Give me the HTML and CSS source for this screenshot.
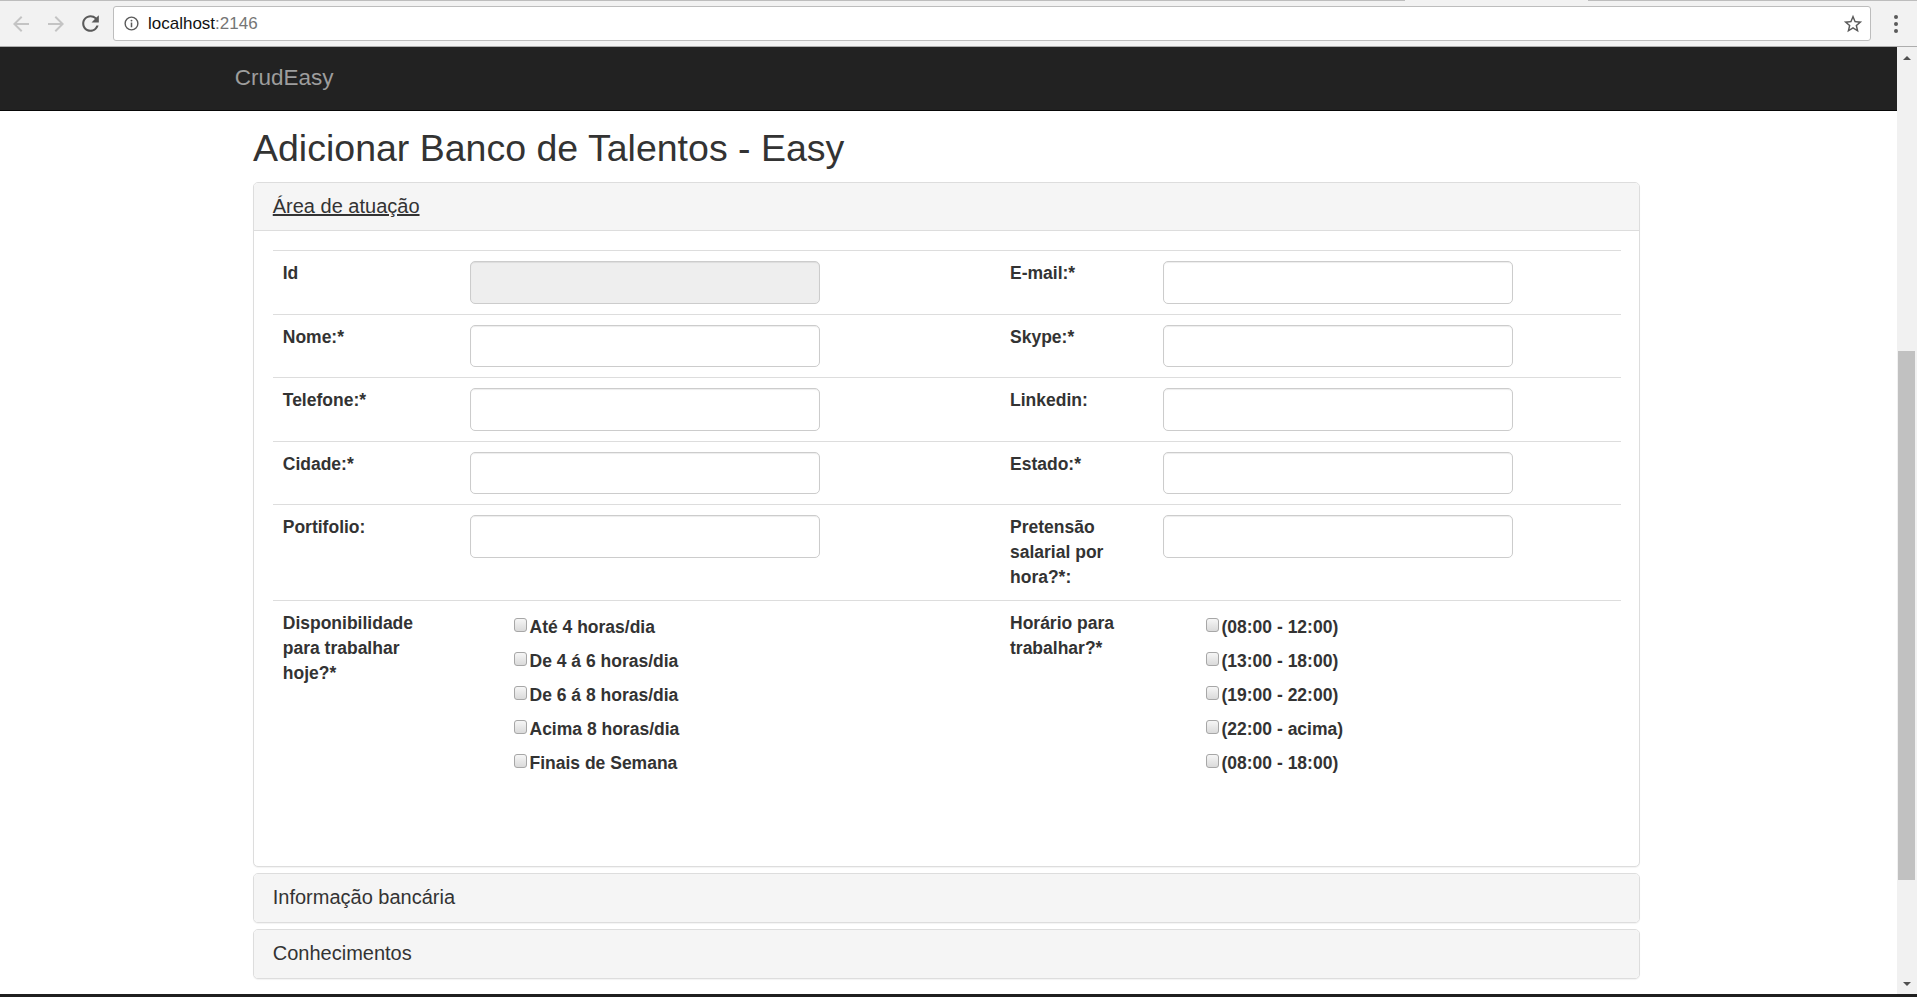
FILE: index.html
```html
<!DOCTYPE html>
<html lang="pt-BR">
<head>
<meta charset="utf-8">
<title>CrudEasy</title>
<link rel="stylesheet" href="styles.css">
</head>
<body>
<div class="chrome">
  <div class="tabline"><div class="seg1"></div><div class="gap"></div><div class="seg2"></div></div>
  <div class="toolbar">
    <div class="navbtn">
      <svg width="16" height="16" viewBox="0 0 16 16"><path d="M16 7H3.8l5.6-5.6L8 0 0 8l8 8 1.4-1.4L3.8 9H16z" fill="#c4c4c4"/></svg>
    </div>
    <div class="navbtn">
      <svg width="16" height="16" viewBox="0 0 16 16"><path d="M0 7h12.2L6.6 1.4 8 0l8 8-8 8-1.4-1.4L12.2 9H0z" fill="#c4c4c4"/></svg>
    </div>
    <div class="navbtn">
      <svg width="25" height="25" viewBox="0 0 24 24"><path d="M17.65 6.35A7.958 7.958 0 0 0 12 4c-4.42 0-7.99 3.58-7.99 8s3.57 8 7.99 8c3.730 0 6.84-2.55 7.73-6h-2.08A5.99 5.99 0 0 1 12 18c-3.31 0-6-2.69-6-6s2.69-6 6-6c1.66 0 3.14.69 4.22 1.78L13 11h7V4l-2.35 2.35z" fill="#5a5a5a"/></svg>
    </div>
    <div class="omnibox">
      <svg class="info" width="15" height="15" viewBox="0 0 16 16"><circle cx="8" cy="8" r="6.8" fill="none" stroke="#5a5a5a" stroke-width="1.5"/><rect x="7.2" y="7" width="1.6" height="5" fill="#5a5a5a"/><circle cx="8" cy="4.9" r="1" fill="#5a5a5a"/></svg>
      <span class="url">localhost<span class="port">:2146</span></span>
      <svg class="star" width="22" height="22" viewBox="0 0 24 24"><path d="M22 9.24l-7.19-.62L12 2 9.19 8.63 2 9.24l5.46 4.73L5.82 21 12 17.27 18.18 21l-1.63-7.03L22 9.24zM12 15.4l-3.76 2.27 1-4.28-3.32-2.88 4.38-.38L12 6.1l1.71 4.04 4.38.38-3.32 2.88 1 4.28L12 15.4z" fill="#5a5a5a"/></svg>
    </div>
    <div class="menu"><span></span><span></span><span></span></div>
  </div>
</div>

<div class="viewport">
  <div class="page">
    <div class="navbar"><span class="brand">CrudEasy</span></div>
    <div class="content">
      <h2 class="title">Adicionar Banco de Talentos - Easy</h2>

      <div class="panel">
        <div class="panel-heading open"><a class="panel-title underline">Área de atuação</a></div>
        <div class="panel-body">
          <table class="form-table">
            <colgroup><col class="c1"><col class="c2"><col class="c3"><col class="c4"></colgroup>
            <tr>
              <td><label>Id</label></td>
              <td><input class="form-control" disabled></td>
              <td><label>E-mail:*</label></td>
              <td><input class="form-control"></td>
            </tr>
            <tr>
              <td><label>Nome:*</label></td>
              <td><input class="form-control"></td>
              <td><label>Skype:*</label></td>
              <td><input class="form-control"></td>
            </tr>
            <tr>
              <td><label>Telefone:*</label></td>
              <td><input class="form-control"></td>
              <td><label>Linkedin:</label></td>
              <td><input class="form-control"></td>
            </tr>
            <tr>
              <td><label>Cidade:*</label></td>
              <td><input class="form-control"></td>
              <td><label>Estado:*</label></td>
              <td><input class="form-control"></td>
            </tr>
            <tr>
              <td><label>Portifolio:</label></td>
              <td><input class="form-control"></td>
              <td><label>Pretensão salarial por hora?*:</label></td>
              <td><input class="form-control"></td>
            </tr>
            <tr class="tall">
              <td><label>Disponibilidade para trabalhar hoje?*</label></td>
              <td>
                <div class="checks left">
                  <label class="check"><input type="checkbox">Até 4 horas/dia</label>
                  <label class="check"><input type="checkbox">De 4 á 6 horas/dia</label>
                  <label class="check"><input type="checkbox">De 6 á 8 horas/dia</label>
                  <label class="check"><input type="checkbox">Acima 8 horas/dia</label>
                  <label class="check"><input type="checkbox">Finais de Semana</label>
                </div>
              </td>
              <td><label>Horário para trabalhar?*</label></td>
              <td>
                <div class="checks right">
                  <label class="check"><input type="checkbox">(08:00 - 12:00)</label>
                  <label class="check"><input type="checkbox">(13:00 - 18:00)</label>
                  <label class="check"><input type="checkbox">(19:00 - 22:00)</label>
                  <label class="check"><input type="checkbox">(22:00 - acima)</label>
                  <label class="check"><input type="checkbox">(08:00 - 18:00)</label>
                </div>
              </td>
            </tr>
          </table>
        </div>
      </div>

      <div class="panel collapsed">
        <div class="panel-heading"><a class="panel-title">Informação bancária</a></div>
      </div>
      <div class="panel collapsed">
        <div class="panel-heading"><a class="panel-title">Conhecimentos</a></div>
      </div>
    </div>
  </div>
  <div class="scrollbar">
    <div class="sb-btn"><span class="tri-up"></span></div>
    <div class="sb-space"></div>
    <div class="sb-thumb"></div>
    <div class="sb-fill"></div>
    <div class="sb-btn"><span class="tri-down"></span></div>
  </div>
</div>
<div class="taskbar"></div>
</body>
</html>
```
FILE: styles.css
```css
* { box-sizing: border-box; }
html, body { margin: 0; padding: 0; }
body {
  width: 1917px;
  height: 997px;
  overflow: hidden;
  display: flex;
  flex-direction: column;
  font-family: "Liberation Sans", Arial, sans-serif;
  color: #333;
  background: #fff;
}

/* browser chrome */
.chrome {
  flex: none;
  height: 47px;
  background: #f2f2f2;
  border-bottom: 1px solid #adadad;
  display: flex;
  flex-direction: column;
}
.tabline { height: 1px; display: flex; flex: none; }
.tabline .seg1 { width: 1405px; background: #bdbdbd; }
.tabline .gap { width: 183px; }
.tabline .seg2 { flex: 1; background: #bdbdbd; }
.toolbar {
  flex: 1;
  display: flex;
  align-items: center;
  padding-left: 3px;
}
.navbtn {
  width: 35px;
  height: 35px;
  display: flex;
  align-items: center;
  justify-content: center;
}
.omnibox {
  margin-left: 5px;
  width: 1758px;
  height: 35px;
  background: #fff;
  border: 1px solid #bdbdbd;
  border-radius: 3px;
  display: flex;
  align-items: center;
  padding: 0 6px 0 10px;
}
.info { flex: none; }
.url {
  margin-left: 9px;
  font-size: 17px;
  color: #111;
  flex: 1;
}
.port { color: #757575; }
.star { flex: none; }
.menu {
  width: 46px;
  padding-left: 23px;
  display: flex;
  flex-direction: column;
  gap: 3px;
}
.menu span {
  width: 4px;
  height: 4px;
  border-radius: 50%;
  background: #5a5a5a;
}

/* viewport */
.viewport {
  flex: none;
  height: 947px;
  display: flex;
}
.page {
  flex: 1;
  overflow: hidden;
}
.navbar {
  height: 64px;
  background: #222;
  border-bottom: 1px solid #080808;
}
.brand {
  display: block;
  margin-left: 216px;
  padding: 0 18.75px;
  line-height: 62px;
  font-size: 22.5px;
  color: #9d9d9d;
}
.content {
  width: 1387px;
  margin-left: 253px;
}
.title {
  margin: 17px 0 13px;
  font-size: 37.5px;
  font-weight: normal;
  line-height: 41.25px;
  color: #333;
}

/* panels */
.panel {
  background: #fff;
  border: 1px solid #ddd;
  border-radius: 5px;
  box-shadow: 0 1px 1px rgba(0,0,0,.05);
}
.panel + .panel { margin-top: 6.25px; }
.panel-heading {
  background: #f5f5f5;
  padding: 12px 18.75px 13px;
  border-radius: 4px;
  border-bottom: 1px solid transparent;
}
.panel-heading.open {
  border-radius: 4px 4px 0 0;
  border-bottom-color: #ddd;
}
.panel-title {
  display: block;
  font-size: 20px;
  line-height: 22px;
  color: #333;
  text-decoration: none;
}
.panel-title.underline { text-decoration: underline; }
.panel-body { padding: 18.75px; }

/* form table */
.form-table {
  width: 1348px;
  border-collapse: collapse;
  table-layout: fixed;
  margin-bottom: 25px;
}
.c1 { width: 186.75px; }
.c2 { width: 540.5px; }
.c3 { width: 153px; }
.c4 { width: 467.75px; }
.form-table td {
  padding: 10px;
  border-top: 1px solid #ddd;
  vertical-align: top;
  font-size: 17.5px;
  line-height: 25px;
}
.form-table label { font-weight: bold; color: #333; }
.form-table tr.tall td { padding-bottom: 46px; }
.form-control {
  display: block;
  width: 350px;
  height: 42.5px;
  padding: 7.5px 15px;
  font: inherit;
  color: #555;
  background: #fff;
  border: 1px solid #ccc;
  border-radius: 5px;
  box-shadow: inset 0 1px 1px rgba(0,0,0,.075);
}
.form-control:disabled { background: #eee; }

.checks {
  display: flex;
  flex-direction: column;
  gap: 9px;
  margin-top: 4px;
}
.checks.left { padding-left: 44px; }
.checks.right { padding-left: 42.5px; }
.check {
  display: flex;
  align-items: flex-start;
  height: 25px;
  line-height: 25px;
  white-space: nowrap;
}
.check input {
  appearance: none;
  -webkit-appearance: none;
  flex: none;
  width: 13px;
  height: 14px;
  margin: 3px 3px 0 0;
  border: 1px solid #a7a7a7;
  border-radius: 3px;
  background: linear-gradient(#f6f6f6, #dadada);
}

/* fake scrollbar */
.scrollbar {
  width: 20px;
  flex: none;
  background: #f1f1f1;
  display: flex;
  flex-direction: column;
}
.sb-btn {
  height: 21px;
  flex: none;
  display: flex;
  align-items: center;
  justify-content: center;
}
.tri-up {
  width: 0; height: 0;
  border-left: 4px solid transparent;
  border-right: 4px solid transparent;
  border-bottom: 4px solid #505050;
}
.tri-down {
  width: 0; height: 0;
  border-left: 4px solid transparent;
  border-right: 4px solid transparent;
  border-top: 4px solid #505050;
}
.sb-space { height: 283px; flex: none; }
.sb-thumb {
  height: 529px;
  flex: none;
  margin: 0 2px 0 1px;
  background: #c1c1c1;
}
.sb-fill { flex: 1; }
.taskbar {
  flex: none;
  height: 3px;
  background: #1f1f1f;
}
```
